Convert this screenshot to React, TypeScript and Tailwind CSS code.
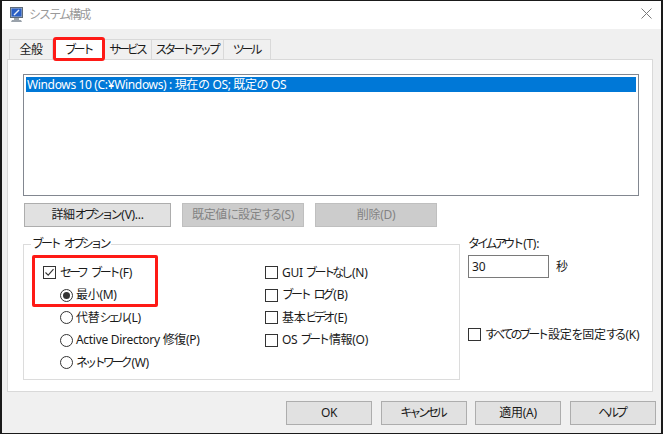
import React from "react";

const font = { fontFamily: '"Noto Sans", "Noto Sans CJK JP", sans-serif' };

// Kana sits much narrower than kanji and latin in the reference font
function K({ children }: { children: React.ReactNode }) {
  return <span className="tracking-[-3.1px] pr-[2px]">{children}</span>;
}

function Btn({ w, disabled, children }: { w: string; disabled?: boolean; children: React.ReactNode }) {
  return (
    <button
      className={`${w} h-[24px] border text-[12px] whitespace-nowrap tracking-[-0.3px] ${
        disabled ? "bg-[#cccccc] border-[#bfbfbf] text-[#838383]" : "bg-[#e1e1e1] border-[#adadad] text-[#1a1a1a]"
      }`}
    >
      {children}
    </button>
  );
}

function Check({ checked, children }: { checked?: boolean; children: React.ReactNode }) {
  return (
    <div className="flex items-center h-[13px] gap-[4px] whitespace-nowrap">
      <div className="w-[13px] h-[13px] border border-[#333333] bg-white shrink-0 flex items-center justify-center">
        {checked && (
          <svg width="11" height="11" viewBox="0 0 11 11">
            <path d="M1.5 5.5 L4.2 8.2 L9.5 2.2" fill="none" stroke="#333" strokeWidth="1.1" />
          </svg>
        )}
      </div>
      <span className="tracking-[-0.3px] text-[12px] text-[#1a1a1a]">{children}</span>
    </div>
  );
}

function Radio({ checked, children }: { checked?: boolean; children: React.ReactNode }) {
  return (
    <div className="flex items-center h-[13px] gap-[3px] whitespace-nowrap">
      <div className="w-[13px] h-[13px] rounded-full border border-[#333333] bg-white shrink-0 flex items-center justify-center">
        {checked && <div className="w-[7px] h-[7px] rounded-full bg-[#333333]" />}
      </div>
      <span className="tracking-[-0.3px] text-[12px] text-[#1a1a1a]">{children}</span>
    </div>
  );
}

function Tab({ w, first, children }: { w: string; first?: boolean; children: React.ReactNode }) {
  return (
    <div
      className={`${w} h-[20px] flex items-center justify-center text-[12px] tracking-[-0.5px] text-[#1a1a1a] bg-[#f0f0f0] border-t border-r border-[#d9d9d9] whitespace-nowrap ${
        first ? "border-l" : ""
      }`}
    >
      {children}
    </div>
  );
}

export default function App() {
  return (
    <div className="w-[663px] h-[434px] bg-white overflow-hidden" style={font}>
      <div className="h-[434px] w-[663px] border-t border-l-2 border-r-2 border-b border-[#1a1a1a] flex flex-col">
        {/* Title bar */}
        <div className="h-[28px] bg-white flex items-center pl-[7px] shrink-0">
          <svg width="15" height="16" viewBox="0 0 15 16" className="shrink-0 -mt-[1px]">
            <rect x="1.5" y="0.5" width="12" height="10" fill="#aebccd" stroke="#5f6b78" />
            <rect x="2.5" y="1.5" width="10" height="8" fill="#2b5fc4" />
            <path d="M5 8 L10 3" stroke="#e6eef8" strokeWidth="1.5" />
            <path d="M5 11 H10 V13 H12 L13 15 H2 L3 13 H5 Z" fill="#9aa2ab" />
          </svg>
          <span className="ml-[5px] text-[12px] tracking-[-1.9px] text-[#9a9a9a]">システム構成</span>
          <svg width="11" height="11" viewBox="0 0 11 11" className="ml-auto mr-[9px] mt-[-3px]">
            <path d="M0.5 0.5 L10.5 10.5 M10.5 0.5 L0.5 10.5" stroke="#7a7a7a" strokeWidth="1" />
          </svg>
        </div>

        {/* Client area */}
        <div className="flex-1 bg-[#f0f0f0] pl-[5px] pt-[10px] flex flex-col">
          <div className="flex pl-[2px] h-[20px]">
            <Tab w="w-[44px]" first>全般</Tab>
            <div className="relative w-[52px] h-[21px] bg-white z-10 flex items-center justify-center text-[12px] text-[#1a1a1a] whitespace-nowrap">
              <K>ブート</K>
              <div className="absolute left-0 -top-[2px] w-[52px] h-[24px] border-[3px] border-[#fe1a16] rounded-[3px]" />
            </div>
            <Tab w="w-[47px]"><K>サービス</K></Tab>
            <Tab w="w-[72px]"><K>スタートアップ</K></Tab>
            <Tab w="w-[47px]"><K>ツール</K></Tab>
          </div>

          <div className="w-[646px] h-[333px] bg-white border border-[#d9d9d9] pt-[14px] pl-[15px] flex flex-col">
            <div className="w-[616px] h-[122px] border border-[#828790] p-[2px]">
              <div className="h-[15px] bg-[#0078d7] text-white text-[12px] tracking-[-0.35px] leading-[15px] pl-[1px] whitespace-nowrap">
                Windows 10 (C:¥Windows) : 現在の OS; 既定の OS
              </div>
            </div>

            <div className="flex mt-[7px] pl-[1px] gap-[11px]">
              <Btn w="w-[147px]">詳細<K>オプション</K>(V)...</Btn>
              <Btn w="w-[122px]" disabled>既定値<K>に</K>設定<K>する</K>(S)</Btn>
              <Btn w="w-[122px]" disabled>削除(D)</Btn>
            </div>

            <div className="flex mt-[12px]">
              {/* Boot options group */}
              <div className="relative w-[437px] h-[136px] mt-[5px] shrink-0 border border-[#dcdcdc] pl-[19px] pt-[21px] flex">
                <span className="absolute left-[7px] -top-[9px] bg-white px-[1px] text-[12px] leading-[16px] text-[#1a1a1a] whitespace-nowrap">
                  <K>ブート</K> <K>オプション</K>
                </span>
                <div className="absolute left-[8px] top-[10px] w-[126px] h-[52px] border-[3px] border-[#fe1a16] rounded-[2px]" />
                <div className="w-[222px] flex flex-col gap-[9.5px]">
                  <Check checked><K>セーフ</K> <K>ブート</K>(F)</Check>
                  <div className="pl-[17px] flex flex-col gap-[9.5px]">
                    <Radio checked>最小(M)</Radio>
                    <Radio>代替<K>シェル</K>(L)</Radio>
                    <Radio>Active Directory 修復(P)</Radio>
                    <Radio><K>ネットワーク</K>(W)</Radio>
                  </div>
                </div>
                <div className="flex flex-col gap-[9.5px]">
                  <Check>GUI <K>ブートなし</K>(N)</Check>
                  <Check><K>ブート</K> <K>ログ</K>(B)</Check>
                  <Check>基本<K>ビデオ</K>(E)</Check>
                  <Check>OS <K>ブート</K>情報(O)</Check>
                </div>
              </div>

              {/* Timeout */}
              <div className="ml-[8px] flex flex-col">
                <span className="text-[12px] tracking-[-0.3px] leading-[16px] text-[#1a1a1a] -mt-[3px] whitespace-nowrap"><K>タイムアウト</K>(T):</span>
                <div className="flex items-center mt-[3px]">
                  <div className="w-[81px] h-[23px] border border-[#7a7a7a] bg-white text-[12px] leading-[21px] pl-[3px] text-[#1a1a1a]">30</div>
                  <span className="ml-[7px] text-[12px] text-[#1a1a1a]">秒</span>
                </div>
                <div className="mt-[50px]">
                  <Check><K>すべてのブート</K>設定<K>を</K>固定<K>する</K>(K)</Check>
                </div>
              </div>
            </div>
          </div>

          <div className="flex mt-[9px] pl-[279px] gap-[8.5px]">
            <Btn w="w-[86px]">OK</Btn>
            <Btn w="w-[86px]"><K>キャンセル</K></Btn>
            <Btn w="w-[86px]">適用(A)</Btn>
            <Btn w="w-[86px]"><K>ヘルプ</K></Btn>
          </div>
        </div>
      </div>
    </div>
  );
}
